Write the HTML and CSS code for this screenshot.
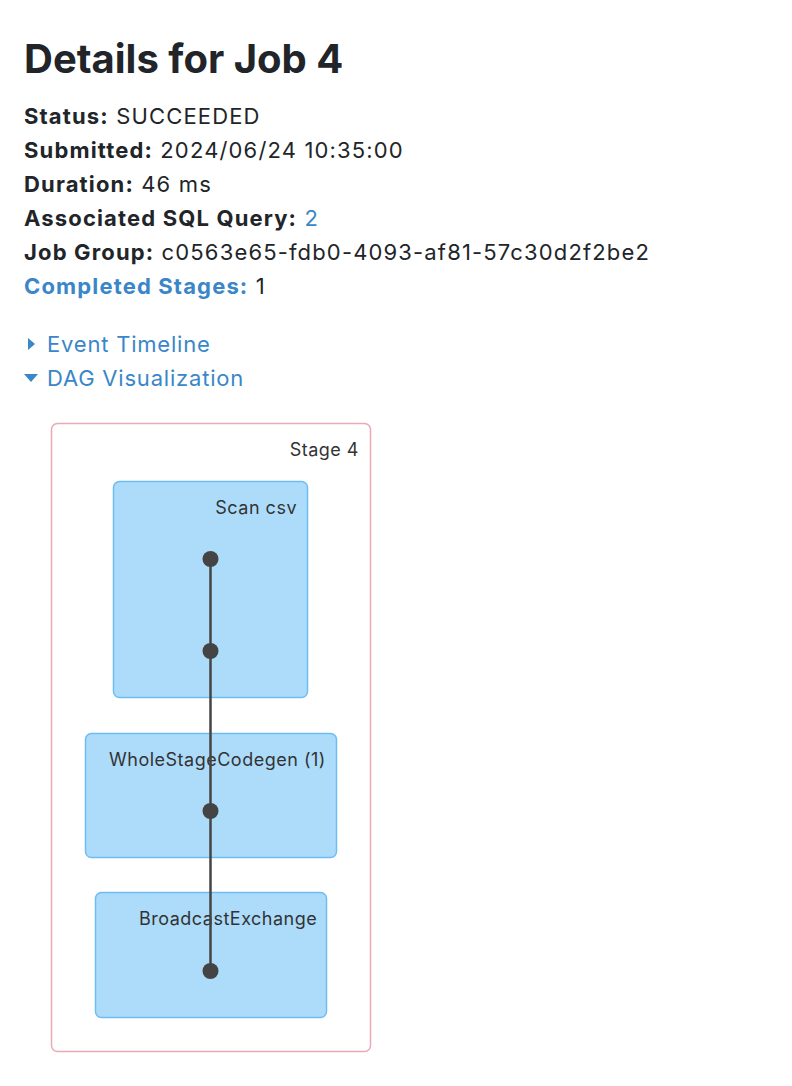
FILE: index.html
```html
<!DOCTYPE html>
<html lang="en">
<head>
    <meta charset="UTF-8">
    <meta name="viewport" content="width=device-width, initial-scale=1.0">
    <link rel="stylesheet" href="styles.css">
</head>
<body>
    <div class="page">
        <h3 class="title">Details for Job 4</h3>
        <ul class="summary">
            <li><strong>Status:</strong> SUCCEEDED</li>
            <li><strong>Submitted:</strong> 2024/06/24 10:35:00</li>
            <li><strong>Duration:</strong> 46 ms</li>
            <li><strong>Associated SQL Query:</strong> <a href="#">2</a></li>
            <li><strong>Job Group:</strong> c0563e65-fdb0-4093-af81-57c30d2f2be2</li>
            <li><a href="#" class="stage-link"><strong>Completed Stages:</strong></a> 1</li>
        </ul>

        <div class="toggles">
            <a href="#" class="toggle">
                <span class="arrow-box"><span class="arrow arrow-right"></span></span>
                Event Timeline
            </a>
            <a href="#" class="toggle">
                <span class="arrow-box"><span class="arrow arrow-down"></span></span>
                DAG Visualization
            </a>
        </div>

        <svg class="dag" width="360" height="650" viewBox="0 0 360 650">
            <rect class="cluster" x="11.5" y="13.5" width="319" height="628" rx="6"></rect>
            <text class="cluster-label" x="319" y="46" text-anchor="end">Stage 4</text>

            <rect class="node" x="73.5" y="71.5" width="194" height="216" rx="6"></rect>
            <text class="node-label" x="257" y="104" text-anchor="end">Scan csv</text>

            <rect class="node" x="45.5" y="323.5" width="251" height="124" rx="6"></rect>
            <text class="node-label" x="69" y="356">WholeStageCodegen (1)</text>

            <rect class="node" x="55.5" y="482.5" width="231" height="125" rx="6"></rect>
            <text class="node-label" x="99" y="515">BroadcastExchange</text>

            <line class="edge" x1="170.5" y1="149" x2="170.5" y2="561"></line>
            <circle class="dot" cx="170.5" cy="149" r="8"></circle>
            <circle class="dot" cx="170.5" cy="241" r="8"></circle>
            <circle class="dot" cx="170.5" cy="401" r="8"></circle>
            <circle class="dot" cx="170.5" cy="561" r="8"></circle>
        </svg>
    </div>
</body>
</html>
```

FILE: styles.css
```css
body {
    margin: 0;
    font-family: Inter, "Liberation Sans", sans-serif;
    color: #212529;
    background-color: #fff;
}

a {
    color: #3a86c8;
    text-decoration: none;
}

.page {
    padding: 0 24px;
}

.title {
    margin: 0;
    padding-top: 35px;
    font-size: 40px;
    line-height: 48px;
    font-weight: 700;
}

.summary {
    list-style: none;
    margin: 16px 0 0;
    padding: 0;
    font-size: 22px;
    line-height: 34px;
    letter-spacing: 1.15px;
}

.summary strong {
    font-weight: 700;
}

.toggles {
    display: flex;
    flex-direction: column;
    margin-top: 24px;
    font-size: 22px;
    line-height: 34px;
    letter-spacing: 0.8px;
}

.toggle {
    display: flex;
    align-items: center;
    gap: 9px;
}

.arrow-box {
    display: flex;
    justify-content: center;
    align-items: center;
    width: 14px;
}

.arrow {
    display: block;
    width: 0;
    height: 0;
}

.arrow-right {
    border-top: 6px solid transparent;
    border-bottom: 6px solid transparent;
    border-left: 7px solid #3a86c8;
}

.arrow-down {
    border-left: 7px solid transparent;
    border-right: 7px solid transparent;
    border-top: 8px solid #3a86c8;
}

.dag {
    display: block;
    margin: 15px 0 0 16px;
}

.cluster {
    fill: #fff;
    stroke: #eba8b6;
    stroke-width: 1.5;
}

.cluster-label,
.node-label {
    font-family: Inter, "Liberation Sans", sans-serif;
    font-size: 18px;
    letter-spacing: 0.5px;
    fill: #333;
}

.node {
    fill: #addcfb;
    stroke: #6fbcf2;
    stroke-width: 1.5;
}

.edge {
    stroke: #444;
    stroke-width: 2.5;
}

.dot {
    fill: #444;
}
```
